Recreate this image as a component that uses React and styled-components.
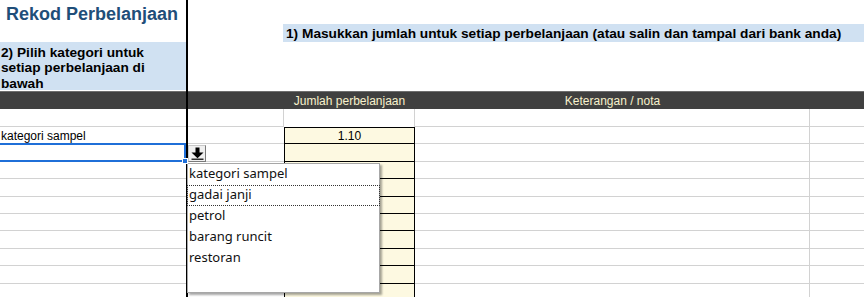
import React from 'react';
import styled, { createGlobalStyle } from 'styled-components';

const Global = createGlobalStyle`
  html, body { margin: 0; padding: 0; background: #fff; }
  body { font-family: "Liberation Sans", Arial, sans-serif; overflow: hidden; }
`;

const dataRows = [18, 17, 18, 17, 18, 17, 17, 18, 17, 18, 17];

const Sheet = styled.div`
  position: relative;
  display: grid;
  grid-template-columns: 186px 2px 96px 131px 395px 1fr;
  grid-template-rows: 24px 18px 49px 18px ${dataRows.map((h) => h + 'px').join(' ')};
  width: 864px;
  height: 297px;
  overflow: hidden;
  background: #fff;
`;

const FreezeLine = styled.div`
  grid-column: 2;
  grid-row: 1 / -1;
  background: #000;
`;

const Blank = styled.div`
  grid-column: span ${(p) => p.$span || 1};
`;

const Title = styled.div`
  font-size: 18px;
  font-weight: bold;
  color: #1f4e79;
  padding: 4px 0 0 6px;
  white-space: nowrap;
`;

const Band = styled.div`
  grid-column: span 3;
  background: #d0e1f2;
  font-size: 13.7px;
  font-weight: bold;
  color: #000;
  display: flex;
  align-items: center;
  padding: 1px 0 0 3px;
  white-space: nowrap;
  margin-left: -1px;
`;

const Instruction = styled.div`
  background: #d0e1f2;
  font-size: 13.7px;
  font-weight: bold;
  line-height: 15.3px;
  color: #000;
  padding: 3px 22px 0 1px;
  margin-bottom: 1px;
`;

const HeaderCell = styled.div`
  grid-column: span ${(p) => p.$span || 1};
  background: #404040;
  border-top: 1px solid #6e6e6e;
  color: #f7f1cc;
  font-size: 12px;
  display: flex;
  align-items: center;
  justify-content: center;
  white-space: nowrap;
`;

const GridCell = styled.div`
  position: relative;
  box-sizing: border-box;
  border-bottom: 1px solid #d2d2d2;
  border-right: ${(p) => (p.$noRight ? 'none' : '1px solid #d2d2d2')};
  font-size: 12px;
  color: #000;
  display: flex;
  align-items: center;
  padding: 1px 1px 0;
  white-space: nowrap;

  ${(p) =>
    p.$selected &&
    `
    &::after {
      content: '';
      position: absolute;
      top: -1px;
      bottom: -1px;
      left: -3px;
      right: 0;
      border: 2px solid #1f6fd8;
    }
    &::before {
      content: '';
      position: absolute;
      right: -2px;
      bottom: -3px;
      width: 4px;
      height: 4px;
      background: #1f6fd8;
      border: 1px solid #fff;
      z-index: 1;
    }
  `}
`;

const AmountCell = styled.div`
  box-sizing: border-box;
  background: ${(p) => (p.$plain ? '#fff' : '#fdf9e1')};
  border-left: 1px solid ${(p) => (p.$plain ? 'transparent' : '#000')};
  border-right: 1px solid ${(p) => (p.$plain ? '#d2d2d2' : '#000')};
  border-top: ${(p) => (p.$first ? '1px solid #000' : 'none')};
  border-bottom: ${(p) => (p.$plain ? 'none' : '1px solid #000')};
  font-size: 12px;
  color: #000;
  display: flex;
  align-items: center;
  justify-content: center;
`;

const DropButton = styled.div`
  position: absolute;
  left: 188px;
  top: 145px;
  width: 18px;
  height: 17px;
  box-sizing: border-box;
  background: #f0f0f0;
  border: 1px solid #7a7a7a;
  border-top-color: #c8c8c8;
  border-left-color: #c8c8c8;
  display: flex;
  align-items: center;
  justify-content: center;
`;

const DropList = styled.div`
  position: absolute;
  left: 187px;
  top: 163px;
  width: 193px;
  height: 130px;
  box-sizing: border-box;
  background: #fff;
  border: 1px solid #a7a7a7;
  box-shadow: 2px 2px 2px rgba(0, 0, 0, 0.35);
  font-family: "Noto Sans", "Open Sans", sans-serif;
  font-size: 13px;
  color: #111;
`;

const ListItem = styled.div`
  height: 21px;
  line-height: 17px;
  padding-left: 1px;
  box-sizing: border-box;
  border: 1px dotted ${(p) => (p.$focus ? '#333' : 'transparent')};
  margin: 0 -1px;
`;

const ArrowIcon = () => (
  <svg width="13" height="13" viewBox="0 0 13 13">
    <rect x="4.5" y="0.5" width="4" height="5.5" fill="#000" />
    <polygon points="0.5,5.5 12.5,5.5 6.5,11.2" fill="#000" />
    <rect x="0.5" y="11.6" width="12" height="1.2" fill="#000" />
  </svg>
);

const items = ['kategori sampel', 'gadai janji', 'petrol', 'barang runcit', 'restoran'];

export default function App() {
  return (
    <>
      <Global />
      <Sheet>
        <FreezeLine />

        <Title>Rekod Perbelanjaan</Title>
        <Blank />
        <Blank $span={3} />

        <Blank />
        <Blank />
        <Band>1) Masukkan jumlah untuk setiap perbelanjaan (atau salin dan tampal dari bank anda)</Band>

        <Instruction>2) Pilih kategori untuk setiap perbelanjaan di bawah</Instruction>
        <Blank />
        <Blank $span={3} />

        <HeaderCell />
        <HeaderCell />
        <HeaderCell>Jumlah perbelanjaan</HeaderCell>
        <HeaderCell>Keterangan / nota</HeaderCell>
        <HeaderCell />

        {dataRows.map((h, i) => (
          <React.Fragment key={i}>
            <GridCell $noRight $selected={i === 2}>
              {i === 1 ? 'kategori sampel' : ''}
            </GridCell>
            <GridCell $noRight={i > 0}>{''}</GridCell>
            <AmountCell $plain={i === 0} $first={i === 1}>
              {i === 1 ? '1.10' : ''}
            </AmountCell>
            <GridCell />
            <GridCell $noRight />
          </React.Fragment>
        ))}

        <DropButton>
          <ArrowIcon />
        </DropButton>
        <DropList>
          {items.map((t, i) => (
            <ListItem key={t} $focus={i === 1}>
              {t}
            </ListItem>
          ))}
        </DropList>
      </Sheet>
    </>
  );
}
